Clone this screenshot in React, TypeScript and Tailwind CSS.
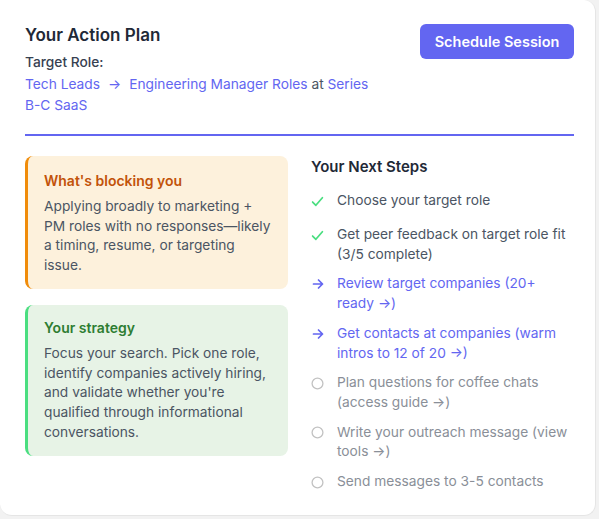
import React from "react";

const Check = () => (
  <svg width="13" height="13" viewBox="0 0 24 24" fill="none" stroke="#4ade80" strokeWidth="3.2" strokeLinecap="round" strokeLinejoin="round">
    <path d="M3 13l6 6L21 5" />
  </svg>
);

const Arrow = () => (
  <svg width="12" height="12" viewBox="0 0 24 24" fill="none" stroke="#6366f1" strokeWidth="3.4" strokeLinecap="round" strokeLinejoin="round">
    <path d="M3 12h18M13 4l8 8-8 8" />
  </svg>
);

const Circle = () => (
  <svg width="13" height="13" viewBox="0 0 24 24" fill="none" stroke="#c2c2c2" strokeWidth="2.4">
    <circle cx="12" cy="12" r="10" />
  </svg>
);

type Step = { kind: "done" | "active" | "todo"; text: string };

const steps: Step[] = [
  { kind: "done", text: "Choose your target role" },
  { kind: "done", text: "Get peer feedback on target role fit (3/5 complete)" },
  { kind: "active", text: "Review target companies (20+ ready →)" },
  { kind: "active", text: "Get contacts at companies (warm intros to 12 of 20 →)" },
  { kind: "todo", text: "Plan questions for coffee chats (access guide →)" },
  { kind: "todo", text: "Write your outreach message (view tools →)" },
  { kind: "todo", text: "Send messages to 3-5 contacts" },
];

export default function App() {
  return (
    <div className="w-[599px] h-[519px] bg-[#f2f2f2] overflow-hidden" style={{ fontFamily: "Inter, 'Noto Sans', sans-serif" }}>
      <div className="w-[596px] h-[516px] bg-white rounded-br-xl rounded-tr-xl rounded-bl-xl border-b border-r border-[#e5e5e5] pl-[25px] pr-[21px] pt-[23px]">
        <div className="flex justify-between items-start">
          <div>
            <h1 className="text-[17px] leading-[24px] font-semibold text-[#1f2937]">Your Action Plan</h1>
            <div className="mt-[5px] text-[13.75px] leading-[21px] font-medium text-[#374151]">Target Role:</div>
            <div className="mt-[1px] w-[372px] text-[13.75px] leading-[21px] text-[#6366f1]">
              Tech Leads<span className="mx-[8px]">→</span>Engineering Manager Roles <span className="text-[#4b5563]">at</span> Series <span className="whitespace-nowrap">B-C SaaS</span>
            </div>
          </div>
          <button className="mt-[1px] w-[154px] h-[35px] rounded-md bg-[#6366f1] text-white text-[14.5px] font-semibold">
            Schedule Session
          </button>
        </div>
        <div className="mt-[18px] h-[2px] bg-[#6366f1]" />
        <div className="mt-[20px] flex gap-[23px]">
          <div className="w-[263px] flex flex-col gap-[16px]">
            <div className="rounded-lg bg-[#fdf1dc] border-l-[3px] border-[#f08c0a] pl-[16px] pr-[12px] pt-[15px] pb-[13px]">
              <div className="text-[14px] leading-[20px] font-semibold text-[#c2530a]">What's blocking you</div>
              <p className="mt-[6px] text-[13.75px] leading-[19.7px] text-[#4b5563]">
                Applying broadly to marketing + PM roles with no responses—likely a timing, resume, or targeting issue.
              </p>
            </div>
            <div className="rounded-lg bg-[#e7f3e6] border-l-[3px] border-[#4ade80] pl-[16px] pr-[12px] pt-[13px] pb-[14px]">
              <div className="text-[14px] leading-[20px] font-semibold text-[#2e7d32]">Your strategy</div>
              <p className="mt-[6px] text-[13.75px] leading-[19.7px] text-[#4b5563]">
                Focus your search. Pick one role, identify companies actively hiring, and validate whether you're qualified through informational conversations.
              </p>
            </div>
          </div>
          <div className="flex-1">
            <h2 className="text-[15px] leading-[22px] font-semibold text-[#1f2937]">Your Next Steps</h2>
            <ul className="mt-[13px] flex flex-col gap-[10px]">
              {steps.map((s, i) => (
                <li key={i} className="flex items-start gap-[13px] min-h-[24px]">
                  <span className="w-[13px] h-[20px] flex items-center justify-center shrink-0">
                    {s.kind === "done" ? <Check /> : s.kind === "active" ? <Arrow /> : <Circle />}
                  </span>
                  <span
                    className={
                      "text-[13.75px] leading-[19.7px] " +
                      (s.kind === "done" ? "text-[#4b5563]" : s.kind === "active" ? "text-[#6366f1]" : "text-[#8a8f98]")
                    }
                  >
                    {s.text}
                  </span>
                </li>
              ))}
            </ul>
          </div>
        </div>
      </div>
    </div>
  );
}
